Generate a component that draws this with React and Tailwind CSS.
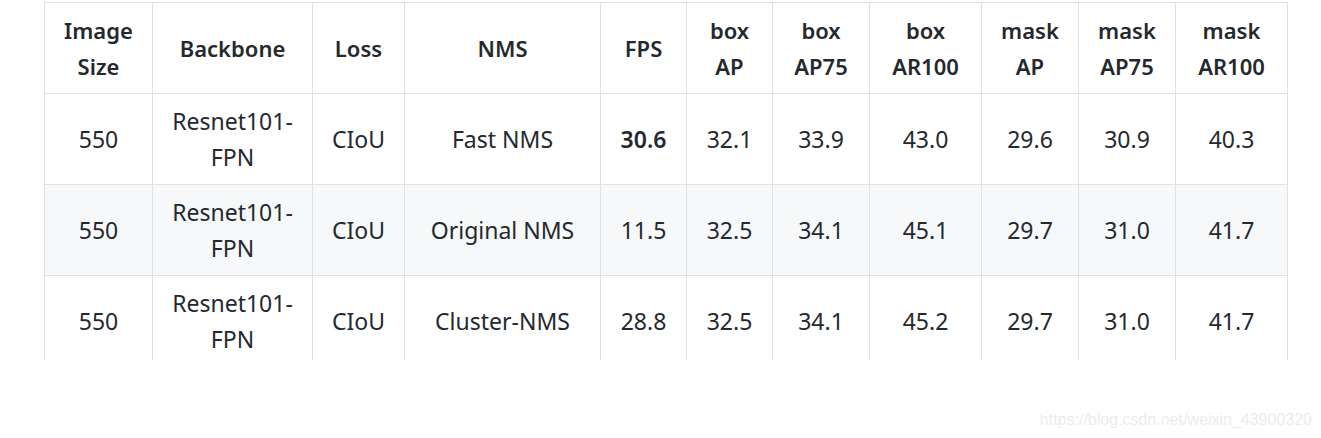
import React from 'react';

const cols = [108, 160, 92, 196, 86, 86, 97, 112, 97, 97, 112];

const head = [
  ['Image', 'Size'],
  ['Backbone'],
  ['Loss'],
  ['NMS'],
  ['FPS'],
  ['box', 'AP'],
  ['box', 'AP75'],
  ['box', 'AR100'],
  ['mask', 'AP'],
  ['mask', 'AP75'],
  ['mask', 'AR100'],
];

const rows = [
  ['550', 'Resnet101-|FPN', 'CIoU', 'Fast NMS', '30.6', '32.1', '33.9', '43.0', '29.6', '30.9', '40.3'],
  ['550', 'Resnet101-|FPN', 'CIoU', 'Original NMS', '11.5', '32.5', '34.1', '45.1', '29.7', '31.0', '41.7'],
  ['550', 'Resnet101-|FPN', 'CIoU', 'Cluster-NMS', '28.8', '32.5', '34.1', '45.2', '29.7', '31.0', '41.7'],
];

export default function App() {
  return (
    <div className="w-[1321px] h-[438px] bg-white text-[#24292e] font-['Noto_Sans',sans-serif]">
      <div className="h-[360px] overflow-hidden pt-[2px] pl-[44px]">
        <table className="table-fixed border-collapse w-[1243px] text-[22px] leading-[36px]">
          <colgroup>
            {cols.map((w, i) => (
              <col key={i} style={{ width: w }} />
            ))}
          </colgroup>
          <thead>
            <tr className="h-[91px]">
              {head.map((h, i) => (
                <th key={i} className="border border-[#dfe2e5] font-semibold text-center align-middle px-1">
                  {h.map((l, j) => (
                    <div key={j}>{l}</div>
                  ))}
                </th>
              ))}
            </tr>
          </thead>
          <tbody className="text-[23px]">
            {rows.map((r, ri) => (
              <tr key={ri} className={ri % 2 === 1 ? 'h-[91px] bg-[#f6f8fa]' : 'h-[91px] bg-white'}>
                {r.map((c, ci) => (
                  <td
                    key={ci}
                    className={
                      'border border-[#dfe2e5] text-center align-middle px-1' +
                      (ri === 0 && ci === 4 ? ' font-semibold' : '')
                    }
                  >
                    {c.split('|').map((l, j) => (
                      <div key={j}>{l}</div>
                    ))}
                  </td>
                ))}
              </tr>
            ))}
          </tbody>
        </table>
      </div>
      <div className="flex justify-end pr-[9px] mt-[50px]">
        <span className="font-['Liberation_Sans',sans-serif] text-[16px] leading-[20px] text-[#ececec]">
          https://blog.csdn.net/weixin_43900320
        </span>
      </div>
    </div>
  );
}
